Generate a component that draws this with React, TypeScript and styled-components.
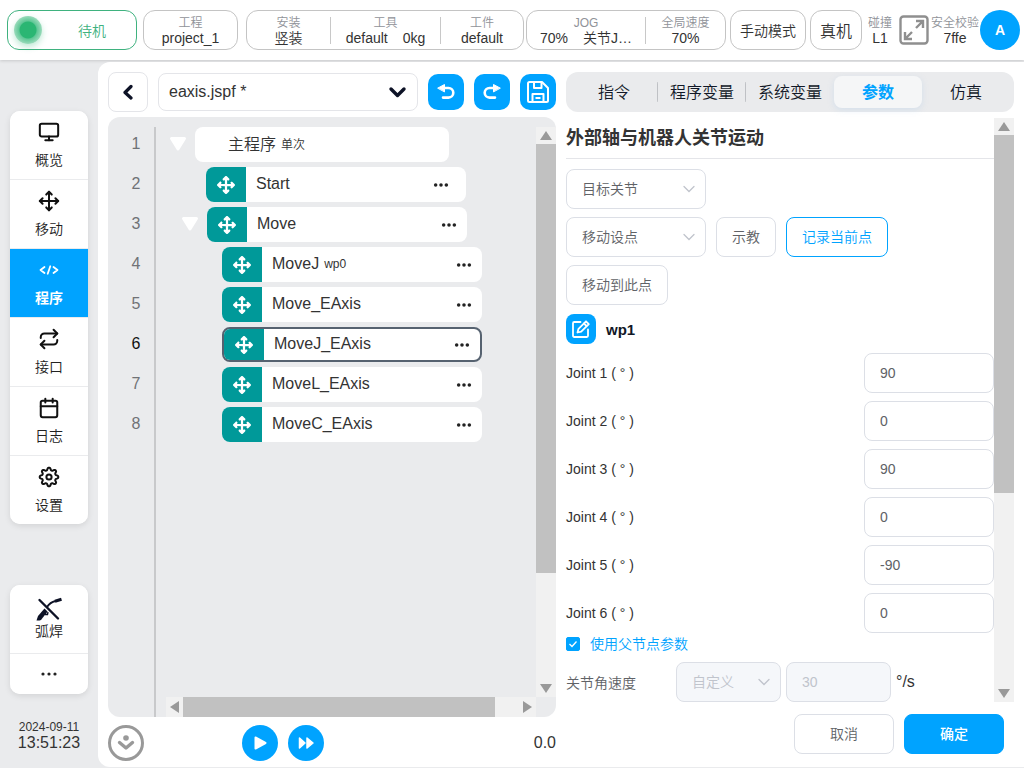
import React, { useState } from 'react';
import styled, { createGlobalStyle, css } from 'styled-components';
import { Monitor, Move, Repeat, Calendar } from 'lucide-react';
import { FaArrowsUpDownLeftRight } from 'react-icons/fa6';

const blue = '#00a3ff';
const gray = '#eaebed';
const line = '#dcdfe6';

const GlobalStyle = createGlobalStyle`
  * { box-sizing: border-box; }
  body {
    margin: 0;
    background: ${gray};
    color: #333;
    font-family: "Liberation Sans", "Noto Sans CJK SC", sans-serif;
    font-size: 14px;
    font-weight: 350;
  }
  button, input, select { font: inherit; color: inherit; margin: 0; }
  button { padding: 0; border: 0; background: none; cursor: pointer; }
`;

const Page = styled.div`
  display: flex;
  flex-direction: column;
  min-height: 100vh;
`;

/* ---------- top bar ---------- */

const Header = styled.header`
  display: flex;
  align-items: center;
  height: 60px;
  padding: 0 4px 0 7px;
  background: #fff;
  box-shadow: 0 1px 3px rgba(0, 0, 0, 0.15);
`;

const HeaderGroup = styled.div<{ $gap?: number; $grow?: boolean }>`
  display: flex;
  align-items: center;
  gap: ${(p) => p.$gap ?? 0}px;
  flex: ${(p) => (p.$grow ? '1 1 auto' : '0 0 auto')};
`;

const HeaderStart = styled(HeaderGroup)`
  margin-right: 8px;
`;

const pill = css`
  height: 40px;
  border: 1px solid #c4c4c4;
  border-radius: 12px;
  background: #fff;
`;

const Status = styled.div`
  ${pill}
  display: flex;
  align-items: center;
  width: 130px;
  padding-left: 6px;
  border-color: #3fb27f;
  color: #3fb27f;
`;

const StatusLamp = styled.span`
  width: 28px;
  height: 28px;
  border-radius: 50%;
  background: radial-gradient(circle, #2bb673 0 8px, #5fc796 9px, #9adbbb 14px);
  box-shadow: 0 3px 6px rgba(43, 182, 115, 0.3);
`;

const StatusText = styled.span`
  flex: 1;
  padding-left: 6px;
  text-align: center;
`;

const InfoPill = styled.div<{ $width: number; $grow?: boolean }>`
  ${pill}
  display: flex;
  align-items: center;
  flex: ${(p) => (p.$grow ? 1 : 0)} 0 ${(p) => p.$width}px;
`;

const InfoCell = styled.div<{ $width: number }>`
  display: flex;
  flex-direction: column;
  align-items: center;
  flex: 1 0 ${(p) => p.$width}px;
  white-space: nowrap;
  & + & { border-left: 1px solid #c8c8c8; }
`;

const InfoLabel = styled.span`
  height: 12px;
  font-size: 12px;
  line-height: 12px;
  color: #909399;
`;

const InfoValue = styled.span`
  display: flex;
  gap: 15px;
  height: 12px;
  margin-top: 3px;
  line-height: 12px;
`;

const Plain = styled.div<{ $width: number }>`
  display: flex;
  flex-direction: column;
  align-items: center;
  width: ${(p) => p.$width}px;
  white-space: nowrap;
`;

const ModeButton = styled.button<{ $width: number; $size: number }>`
  ${pill}
  width: ${(p) => p.$width}px;
  font-size: ${(p) => p.$size}px;
`;

const IconButton = styled.button`
  display: flex;
  align-items: center;
  justify-content: center;
`;

const FullscreenButton = styled(IconButton)`
  width: 32px;
`;

const Avatar = styled.button`
  width: 40px;
  height: 40px;
  border-radius: 50%;
  background: ${blue};
  color: #fff;
  font-weight: 700;
`;

/* ---------- side bar ---------- */

const Body = styled.div`
  display: flex;
  flex: 1;
  padding: 2px 0 1px;
`;

const Side = styled.aside`
  display: flex;
  flex-direction: column;
  width: 98px;
  padding: 49px 10px 16px;
`;

const NavCard = styled.nav`
  overflow: hidden;
  border-radius: 10px;
  background: #fff;
  box-shadow: 0 2px 6px rgba(0, 0, 0, 0.1);
  & + & { margin-top: 61px; }
`;

const NavItem = styled.button<{ $active?: boolean; $short?: boolean }>`
  display: flex;
  flex-direction: column;
  align-items: center;
  justify-content: center;
  gap: 7px;
  width: 100%;
  height: ${(p) => (p.$short ? 40 : 68)}px;
  padding-top: ${(p) => (p.$short ? 0 : 1)}px;
  color: ${(p) => (p.$active ? '#fff' : '#222')};
  background: ${(p) => (p.$active ? blue : '#fff')};
  font-weight: ${(p) => (p.$active ? 700 : 350)};
  line-height: 20px;
  & + & { box-shadow: 0 -1px 0 ${gray}; margin-top: 1px; }
`;

const NavIcon = styled.span<{ $large?: boolean }>`
  display: flex;
  align-items: center;
  justify-content: center;
  height: 22px;
  margin-bottom: ${(p) => (p.$large ? -6 : 0)}px;
`;

const Clock = styled.div`
  display: flex;
  flex-direction: column;
  align-items: center;
  margin-top: auto;
`;

const ClockDate = styled.span`
  font-size: 12px;
  line-height: 15px;
`;

const ClockTime = styled.span`
  font-size: 16px;
  line-height: 16px;
`;

/* ---------- work area ---------- */

const Main = styled.main`
  display: grid;
  grid-template-columns: minmax(0, 1fr) minmax(0, 1fr);
  gap: 10px;
  flex: 1;
  padding: 10px 10px 0;
  border-radius: 12px 0 0 12px;
  background: #fff;
`;

const Column = styled.section`
  display: flex;
  flex-direction: column;
`;

const Toolbar = styled.div`
  display: flex;
  align-items: center;
  gap: 10px;
  height: 40px;
`;

const BackButton = styled(IconButton)`
  width: 40px;
  height: 40px;
  border: 1px solid #e4e5e9;
  border-radius: 8px;
`;

const SelectBox = styled.span<{ $width?: number }>`
  display: grid;
  align-items: center;
  flex: ${(p) => (p.$width ? `0 0 ${p.$width}px` : '1')};
  & > * { grid-area: 1 / 1; }
  & > svg { justify-self: end; margin-right: 10px; pointer-events: none; }
`;

const FileSelect = styled.select`
  width: 100%;
  height: 38px;
  padding: 0 40px 2px 10px;
  border: 1px solid #e4e5e9;
  border-radius: 8px;
  background: #fff;
  appearance: none;
  font-size: 16px;
`;

const ToolButton = styled(IconButton)`
  width: 36px;
  height: 36px;
  border-radius: 10px;
  background: ${blue};
`;

const Editor = styled.div`
  display: flex;
  flex: 1;
  margin-top: 5px;
  padding-top: 10px;
  border-radius: 12px;
  background: ${gray};
  overflow: hidden;
`;

const Gutter = styled.ol`
  width: 48px;
  margin: 0;
  padding: 0 0 0 10px;
  border-right: 2px solid #c8c9cb;
  list-style: none;
`;

const LineNumber = styled.li<{ $current?: boolean }>`
  height: 40px;
  font-size: 16px;
  line-height: 34px;
  text-align: center;
  color: ${(p) => (p.$current ? '#111' : '#707276')};
`;

const TreePane = styled.div`
  display: flex;
  flex-direction: column;
  flex: 1;
  padding-left: 10px;
`;

const Tree = styled.ul`
  flex: 1;
  margin: 0;
  padding: 0;
  list-style: none;
`;

const TreeRow = styled.li<{ $indent: number }>`
  display: flex;
  align-items: flex-start;
  height: 40px;
  padding-left: ${(p) => p.$indent}px;
`;

const Caret = styled(IconButton)`
  width: 29px;
  height: 35px;
  padding: 0 6px 2px 0;
`;

const NodeCard = styled.div<{ $root?: boolean; $selected?: boolean }>`
  display: flex;
  align-items: center;
  width: ${(p) => (p.$root ? 254 : 260)}px;
  height: 35px;
  padding-left: ${(p) => (p.$root ? 33 : 0)}px;
  padding-right: 10px;
  border: ${(p) => (p.$selected ? '2px solid #566270' : '0')};
  border-radius: 8px;
  background: #fff;
  overflow: hidden;
`;

const NodeIcon = styled.span`
  display: flex;
  align-items: center;
  justify-content: center;
  width: 40px;
  height: 35px;
  margin-right: 10px;
  background: #009999;
  color: #fff;
`;

const NodeName = styled.span<{ $root?: boolean }>`
  display: flex;
  align-items: center;
  gap: 5px;
  padding-bottom: ${(p) => (p.$root ? 0 : 2)}px;
  font-size: 16px;
  line-height: 20px;
`;

const NodeNote = styled.span`
  font-size: 12px;
`;

const MoreButton = styled(IconButton)<{ $inset?: boolean }>`
  width: 16px;
  height: 20px;
  margin-left: auto;
  margin-right: ${(p) => (p.$inset ? 7 : 0)}px;
`;

const Bar = styled.div<{ $vertical?: boolean }>`
  display: flex;
  flex-direction: ${(p) => (p.$vertical ? 'column' : 'row')};
  ${(p) => (p.$vertical ? 'width: 20px;' : 'height: 20px;')}
  flex: none;
  background: #f1f1f1;
`;

const BarArrow = styled(IconButton)<{ $vertical?: boolean }>`
  flex: none;
  width: ${(p) => (p.$vertical ? 20 : 17)}px;
  height: ${(p) => (p.$vertical ? 17 : 20)}px;
`;

const BarTrack = styled.div<{ $vertical?: boolean }>`
  display: flex;
  flex-direction: ${(p) => (p.$vertical ? 'column' : 'row')};
  flex: 1;
`;

const BarThumb = styled.div<{ $share: number }>`
  flex: 0 0 ${(p) => p.$share}%;
  background: #c1c1c1;
`;

const BarSlot = styled.div`
  display: flex;
  padding-bottom: 20px;
`;

const PlayBar = styled.div`
  display: grid;
  grid-template-columns: 1fr auto 1fr;
  align-items: center;
  height: 50px;
  padding: 2px 0 0;
`;

const PlayButtons = styled.div`
  display: flex;
  gap: 10px;
  padding-right: 98px;
`;

const RoundButton = styled(IconButton)<{ $outline?: boolean }>`
  width: 36px;
  height: 36px;
  border-radius: 50%;
  border: ${(p) => (p.$outline ? '3px solid #999' : '0')};
  background: ${(p) => (p.$outline ? '#fff' : blue)};
`;

const Elapsed = styled.output`
  justify-self: end;
  font-size: 16px;
`;

/* ---------- parameter panel ---------- */

const Tabs = styled.div`
  display: grid;
  grid-template-columns: repeat(5, 1fr);
  height: 40px;
  padding: 4px;
  border-radius: 12px;
  background: ${gray};
`;

const TabButton = styled.button<{ $active: boolean; $divided?: boolean }>`
  height: 32px;
  padding-bottom: 2px;
  border-radius: 8px;
  color: #111827;
  font-size: 16px;
  white-space: nowrap;
  background: ${(p) =>
    p.$divided ? 'linear-gradient(#bfc1c5, #bfc1c5) right center / 1px 20px no-repeat' : 'none'};
  ${(p) =>
    p.$active &&
    css`
      background: #f5f6f7;
      color: ${blue};
      font-weight: 700;
      box-shadow: 0 2px 6px rgba(150, 190, 230, 0.25);
    `}
`;

const ParamPane = styled.div`
  display: flex;
  flex: 1;
  margin-top: 6px;
`;

const Params = styled.form`
  flex: 1;
`;

const Title = styled.h1`
  height: 41px;
  margin: 0 0 10px;
  border-bottom: 1px solid #e4e5e9;
  font-size: 18px;
  font-weight: 700;
  line-height: 41px;
`;

const FieldRow = styled.div<{ $spread?: boolean }>`
  display: flex;
  align-items: center;
  justify-content: ${(p) => (p.$spread ? 'space-between' : 'flex-start')};
  gap: 10px;
  min-height: 40px;
  margin-bottom: 8px;
`;

const field = css`
  height: 40px;
  border: 1px solid ${line};
  border-radius: 8px;
  background: #fff;
  color: #606266;
  &:disabled { background: #f5f7fa; color: #c0c4cc; opacity: 1; }
`;

const ParamSelect = styled.select`
  ${field}
  width: 100%;
  padding: 0 26px 0 15px;
  appearance: none;
`;

const TextInput = styled.input<{ $width: number }>`
  ${field}
  width: ${(p) => p.$width}px;
  padding: 0 15px;
`;

const Button = styled.button<{ $tone?: 'outline' | 'primary'; $width: number }>`
  ${field}
  width: ${(p) => p.$width}px;
  padding-bottom: 2px;
  ${(p) => p.$tone === 'outline' && `border-color: ${blue}; color: ${blue};`}
  ${(p) => p.$tone === 'primary' && `border-color: ${blue}; background: ${blue}; color: #fff; font-weight: 500;`}
`;

const PointRow = styled.div`
  display: flex;
  align-items: center;
  gap: 10px;
  height: 32px;
  margin-bottom: 8px;
  font-size: 15px;
  font-weight: 700;
  color: #111827;
`;

const EditButton = styled(IconButton)`
  width: 30px;
  height: 30px;
  border-radius: 8px;
  background: ${blue};
`;

const InheritRow = styled.label`
  display: flex;
  align-items: center;
  gap: 10px;
  height: 22px;
  margin: -8px 0 7px;
  line-height: 20px;
  color: ${blue};
`;

const TickBox = styled.span`
  display: grid;
  & > * { grid-area: 1 / 1; }
  & > svg { pointer-events: none; }
`;

const Tick = styled.input`
  width: 14px;
  height: 14px;
  margin: 0;
  appearance: none;
  border: 1px solid ${blue};
  border-radius: 2px;
  background: #fff;
  &:checked { background: ${blue}; }
`;

const SpeedRow = styled.div`
  display: flex;
  align-items: center;
  gap: 5px;
  color: #606266;
`;

const SpeedLabel = styled.label`
  width: 105px;
`;

const Unit = styled.span`
  font-size: 16px;
  color: #333;
`;

const Actions = styled.div`
  display: flex;
  justify-content: flex-end;
  gap: 10px;
  padding: 12px 10px 13px 0;
`;

/* ---------- drawings ---------- */

const arrowPoints = {
  up: '10,4 16,13 4,13',
  down: '4,4 16,4 10,13',
  left: '4,10 13,4 13,16',
  right: '4,4 13,10 4,16',
};

function Scrollbar({ vertical, share }: { vertical?: boolean; share: number }) {
  const box = vertical ? { width: 20, height: 17 } : { width: 17, height: 20 };
  const arrow = (dir: keyof typeof arrowPoints) => (
    <BarArrow type="button" $vertical={vertical} aria-label={dir}>
      <svg {...box}>
        <polygon points={arrowPoints[dir]} fill="#999" />
      </svg>
    </BarArrow>
  );
  return (
    <Bar $vertical={vertical}>
      {arrow(vertical ? 'up' : 'left')}
      <BarTrack $vertical={vertical}>
        <BarThumb $share={share} />
      </BarTrack>
      {arrow(vertical ? 'down' : 'right')}
    </Bar>
  );
}

function Chevron({ bold }: { bold?: boolean }) {
  return bold ? (
    <svg width="20" height="12" viewBox="0 0 20 12" fill="none" stroke="#0d1226" strokeWidth="3.4" strokeLinecap="round" strokeLinejoin="round">
      <path d="M3 3l6.5 6.5L16 3" />
    </svg>
  ) : (
    <svg width="14" height="8" viewBox="0 0 14 8" fill="none" stroke="#c0c4cc" strokeWidth="1.3" strokeLinecap="round">
      <path d="M2 1.5l5 5 5-5" />
    </svg>
  );
}

function Dots({ r = 2 }: { r?: number }) {
  return (
    <svg width="18" height="6" viewBox="-9 -3 18 6" fill="#222">
      <circle cx="-6" r={r} />
      <circle r={r} />
      <circle cx="6" r={r} />
    </svg>
  );
}

/* Outline of a cog with eight rounded teeth. */
const gearOutline = Array.from({ length: 96 }, (_, i) => {
  const angle = (i / 96) * Math.PI * 2;
  const wave = Math.cos(8 * angle);
  const r = 8.1 + 1.2 * Math.sign(wave) * Math.sqrt(Math.abs(wave));
  return `${(r * Math.cos(angle)).toFixed(2)},${(r * Math.sin(angle)).toFixed(2)}`;
}).join(' ');

function GearIcon() {
  return (
    <svg width="22" height="22" viewBox="-11 -11 22 22" fill="none" stroke="#111" strokeWidth="2" strokeLinejoin="round">
      <polygon points={gearOutline} />
      <circle r="2.6" />
    </svg>
  );
}

function CodeIcon() {
  return (
    <svg width="20" height="10" viewBox="0 0 20 10" fill="none" stroke="#fff" strokeWidth="1.8" strokeLinecap="round" strokeLinejoin="round">
      <path d="M5.5 2L1.5 5l4 3M14.5 2l4 3-4 3M11.3 1.3L8.7 8.7" />
    </svg>
  );
}

function WeldIcon() {
  return (
    <svg width="28" height="24" viewBox="0 0 28 24" fill="none" stroke="#0d1226">
      <path d="M4.5 3L23 21.5" strokeWidth="2.4" strokeLinecap="round" />
      <path d="M1.5 23.5L3 19L9.500 11.500L12.500 14.500L6 23L4.500 23.500Z" fill="#0d1226" stroke="none" />
      <path d="M12 10C14 7 16.500 5 20.500 4" strokeWidth="2" />
      <path d="M20 4.200L26.500 2.200" strokeWidth="3" />
      <path d="M10.500 15V17.500H12.500L13 15" strokeWidth="1.4" />
    </svg>
  );
}

function FullscreenIcon() {
  return (
    <svg width="30" height="30" viewBox="0 0 30 30" fill="none" stroke="#8f8f8f" strokeWidth="2.4">
      <rect x="1.500" y="1.5" width="27" height="27" rx="3" />
      <path d="M17 6H24V13M23.5 6.5L17 13M6 17V24H13M6.5 23.5L13 17" />
    </svg>
  );
}

function TurnIcon({ flip }: { flip?: boolean }) {
  return (
    <svg width="20" height="20" viewBox="0 0 20 20" fill="none" stroke="#fff" strokeWidth="2.6" strokeLinecap="round">
      <g transform={flip ? 'translate(20 0) scale(-1 1)' : undefined}>
        <path d="M6 6H12.5A4.8 4.8 0 0 1 12.5 15.6H7" />
        <path d="M2 6L8.5 2.5V9.5Z" fill="#fff" stroke="#fff" strokeWidth="1" strokeLinejoin="round" />
      </g>
    </svg>
  );
}

function SaveIcon() {
  return (
    <svg width="24" height="24" viewBox="0 0 24 24" fill="none" stroke="#fff" strokeWidth="2" strokeLinejoin="round">
      <path d="M3.5 2H16L22 8V20.5A1.5 1.5 0 0 1 20.5 22H3.5A1.5 1.5 0 0 1 2 20.5V3.5A1.5 1.5 0 0 1 3.5 2Z" />
      <path d="M8 2V8H15.5V2M6.5 22V14H17.5V22M9.5 18H14.5" />
    </svg>
  );
}

function EditIcon() {
  return (
    <svg width="20" height="20" viewBox="0 0 20 20" fill="none" stroke="#fff" strokeWidth="1.8" strokeLinecap="round" strokeLinejoin="round">
      <path d="M9.5 3H3.2A1.2 1.2 0 0 0 2 4.2V16.8A1.2 1.2 0 0 0 3.2 18H15.8A1.2 1.2 0 0 0 17 16.8V10.5" />
      <path d="M6.5 13.5L7.5 9.8L15 2.3L17.8 5.1L10.2 12.6Z" />
      <path d="M13 4.5L15.5 7" />
    </svg>
  );
}

function CollapseIcon() {
  return (
    <svg width="18" height="16" viewBox="0 0 18 16" fill="none" stroke="#999">
      <circle cx="9" cy="3" r="2.8" fill="#999" stroke="none" />
      <path d="M2.5 7.5L9 13L15.5 7.5" strokeWidth="3.4" strokeLinecap="round" strokeLinejoin="round" />
    </svg>
  );
}

/* ---------- data ---------- */

const iconProps = { size: 22, strokeWidth: 2.2, color: '#111' };

const navItems = [
  { label: '概览', icon: <Monitor {...iconProps} /> },
  { label: '移动', icon: <Move {...iconProps} /> },
  { label: '程序', icon: <CodeIcon />, active: true },
  { label: '接口', icon: <Repeat {...iconProps} /> },
  { label: '日志', icon: <Calendar {...iconProps} /> },
  { label: '设置', icon: <GearIcon /> },
];

type TreeNode = {
  name: string;
  note?: string;
  indent: number;
  caret?: boolean;
  root?: boolean;
  inset?: boolean;
};

const nodes: TreeNode[] = [
  { name: '主程序', note: '单次', indent: 0, caret: true, root: true },
  { name: 'Start', indent: 40, inset: true },
  { name: 'Move', indent: 12, caret: true },
  { name: 'MoveJ', note: 'wp0', indent: 56 },
  { name: 'Move_EAxis', indent: 56 },
  { name: 'MoveJ_EAxis', indent: 56 },
  { name: 'MoveL_EAxis', indent: 56 },
  { name: 'MoveC_EAxis', indent: 56 },
];

const tabs = ['指令', '程序变量', '系统变量', '参数', '仿真'];
const joints = ['90', '0', '90', '0', '-90', '0'];

export default function App() {
  const [tab, setTab] = useState(3);
  const [selected, setSelected] = useState(5);

  return (
    <Page>
      <GlobalStyle />
      <Header>
        <HeaderStart $gap={6}>
          <Status>
            <StatusLamp />
            <StatusText>待机</StatusText>
          </Status>
          <InfoPill $width={95}>
            <InfoCell $width={93}>
              <InfoLabel>工程</InfoLabel>
              <InfoValue>project_1</InfoValue>
            </InfoCell>
          </InfoPill>
        </HeaderStart>
        <HeaderGroup $gap={4} $grow>
          <HeaderGroup $gap={2} $grow>
            <InfoPill $width={278} $grow>
              <InfoCell $width={82}>
                <InfoLabel>安装</InfoLabel>
                <InfoValue>竖装</InfoValue>
              </InfoCell>
              <InfoCell $width={109}>
                <InfoLabel>工具</InfoLabel>
                <InfoValue>
                  <span>default</span>
                  <span>0kg</span>
                </InfoValue>
              </InfoCell>
              <InfoCell $width={82}>
                <InfoLabel>工件</InfoLabel>
                <InfoValue>default</InfoValue>
              </InfoCell>
            </InfoPill>
            <InfoPill $width={200} $grow>
              <InfoCell $width={118}>
                <InfoLabel>JOG</InfoLabel>
                <InfoValue>
                  <span>70%</span>
                  <span>关节J…</span>
                </InfoValue>
              </InfoCell>
              <InfoCell $width={80}>
                <InfoLabel>全局速度</InfoLabel>
                <InfoValue>70%</InfoValue>
              </InfoCell>
            </InfoPill>
          </HeaderGroup>
          <ModeButton $width={76} $size={14}>手动模式</ModeButton>
          <ModeButton $width={52} $size={16}>真机</ModeButton>
        </HeaderGroup>
        <HeaderGroup>
          <Plain $width={36}>
            <InfoLabel>碰撞</InfoLabel>
            <InfoValue>L1</InfoValue>
          </Plain>
          <FullscreenButton aria-label="全屏"><FullscreenIcon /></FullscreenButton>
          <Plain $width={50}>
            <InfoLabel>安全校验</InfoLabel>
            <InfoValue>7ffe</InfoValue>
          </Plain>
          <Avatar>A</Avatar>
        </HeaderGroup>
      </Header>

      <Body>
        <Side>
          <NavCard>
            {navItems.map((item) => (
              <NavItem key={item.label} $active={item.active}>
                <NavIcon>{item.icon}</NavIcon>
                {item.label}
              </NavItem>
            ))}
          </NavCard>
          <NavCard>
            <NavItem>
              <NavIcon $large><WeldIcon /></NavIcon>
              弧焊
            </NavItem>
            <NavItem $short aria-label="更多"><Dots r={1.6} /></NavItem>
          </NavCard>
          <Clock>
            <ClockDate>2024-09-11</ClockDate>
            <ClockTime>13:51:23</ClockTime>
          </Clock>
        </Side>

        <Main>
          <Column>
            <Toolbar>
              <BackButton aria-label="返回">
                <svg width="12" height="16" viewBox="0 0 12 16" fill="none" stroke="#0d1226" strokeWidth="3.2" strokeLinecap="round" strokeLinejoin="round">
                  <path d="M9 2.5L3 8.5L9 14" />
                </svg>
              </BackButton>
              <SelectBox>
                <FileSelect aria-label="程序文件">
                  <option>eaxis.jspf *</option>
                </FileSelect>
                <Chevron bold />
              </SelectBox>
              <ToolButton aria-label="撤销"><TurnIcon /></ToolButton>
              <ToolButton aria-label="重做"><TurnIcon flip /></ToolButton>
              <ToolButton aria-label="保存"><SaveIcon /></ToolButton>
            </Toolbar>
            <Editor>
              <Gutter>
                {nodes.map((node, i) => (
                  <LineNumber key={node.name} $current={i === selected}>{i + 1}</LineNumber>
                ))}
              </Gutter>
              <TreePane>
                <Tree>
                  {nodes.map((node, i) => (
                    <TreeRow key={node.name} $indent={node.indent} onClick={() => setSelected(i)}>
                      {node.caret && (
                        <Caret aria-label="折叠">
                          <svg width="18" height="16" viewBox="0 0 18 16" fill="#fff" stroke="#fff" strokeWidth="3" strokeLinejoin="round">
                            <path d="M2.5 2.5H15.5L9 13Z" />
                          </svg>
                        </Caret>
                      )}
                      <NodeCard $root={node.root} $selected={i === selected}>
                        {!node.root && <NodeIcon><FaArrowsUpDownLeftRight size={18} /></NodeIcon>}
                        <NodeName $root={node.root}>
                          {node.name}
                          {node.note && <NodeNote>{node.note}</NodeNote>}
                        </NodeName>
                        {!node.root && (
                          <MoreButton $inset={node.inset} aria-label="更多"><Dots /></MoreButton>
                        )}
                      </NodeCard>
                    </TreeRow>
                  ))}
                </Tree>
                <Scrollbar share={93} />
              </TreePane>
              <BarSlot>
                <Scrollbar vertical share={80} />
              </BarSlot>
            </Editor>
            <PlayBar>
              <RoundButton $outline aria-label="收起"><CollapseIcon /></RoundButton>
              <PlayButtons>
                <RoundButton aria-label="运行">
                  <svg width="14" height="16" viewBox="0 0 14 16" fill="#fff" stroke="#fff" strokeWidth="2" strokeLinejoin="round">
                    <path d="M2.5 2.5L12.5 8L2.5 13.5Z" />
                  </svg>
                </RoundButton>
                <RoundButton aria-label="快进">
                  <svg width="18" height="14" viewBox="0 0 18 14" fill="#fff" stroke="#fff" strokeWidth="1.5" strokeLinejoin="round">
                    <path d="M2.5 2L8 7L2.5 12ZM10 2L16 7L10 12Z" />
                  </svg>
                </RoundButton>
              </PlayButtons>
              <Elapsed>0.0</Elapsed>
            </PlayBar>
          </Column>

          <Column>
            <Tabs role="tablist">
              {tabs.map((label, i) => (
                <TabButton key={label} role="tab" aria-selected={i === tab} $active={i === tab} $divided={i < 2} onClick={() => setTab(i)}>
                  {label}
                </TabButton>
              ))}
            </Tabs>
            <ParamPane>
              <Params>
                <Title>外部轴与机器人关节运动</Title>
                <FieldRow>
                  <SelectBox $width={140}>
                    <ParamSelect aria-label="目标类型"><option>目标关节</option></ParamSelect>
                    <Chevron />
                  </SelectBox>
                </FieldRow>
                <FieldRow>
                  <SelectBox $width={140}>
                    <ParamSelect aria-label="设点方式"><option>移动设点</option></ParamSelect>
                    <Chevron />
                  </SelectBox>
                  <Button type="button" $width={60}>示教</Button>
                  <Button type="button" $width={102} $tone="outline">记录当前点</Button>
                </FieldRow>
                <FieldRow>
                  <Button type="button" $width={102}>移动到此点</Button>
                </FieldRow>
                <PointRow>
                  <EditButton type="button" aria-label="编辑"><EditIcon /></EditButton>
                  wp1
                </PointRow>
                {joints.map((value, i) => (
                  <FieldRow key={i} $spread>
                    <label htmlFor={`joint-${i}`}>{`Joint ${i + 1} ( ° )`}</label>
                    <TextInput id={`joint-${i}`} $width={130} defaultValue={value} />
                  </FieldRow>
                ))}
                <InheritRow>
                  <TickBox>
                    <Tick type="checkbox" defaultChecked />
                    <svg width="14" height="14" fill="none" stroke="#fff" strokeWidth="1.3">
                      <path d="M3.5 7L6 9.5L10.5 4.5" />
                    </svg>
                  </TickBox>
                  使用父节点参数
                </InheritRow>
                <SpeedRow>
                  <SpeedLabel htmlFor="speed">关节角速度</SpeedLabel>
                  <SelectBox $width={105}>
                    <ParamSelect aria-label="速度模式" disabled><option>自定义</option></ParamSelect>
                    <Chevron />
                  </SelectBox>
                  <TextInput id="speed" $width={105} defaultValue="30" disabled />
                  <Unit>°/s</Unit>
                </SpeedRow>
              </Params>
              <Scrollbar vertical share={65} />
            </ParamPane>
            <Actions>
              <Button type="button" $width={100}>取消</Button>
              <Button type="button" $width={100} $tone="primary">确定</Button>
            </Actions>
          </Column>
        </Main>
      </Body>
    </Page>
  );
}
